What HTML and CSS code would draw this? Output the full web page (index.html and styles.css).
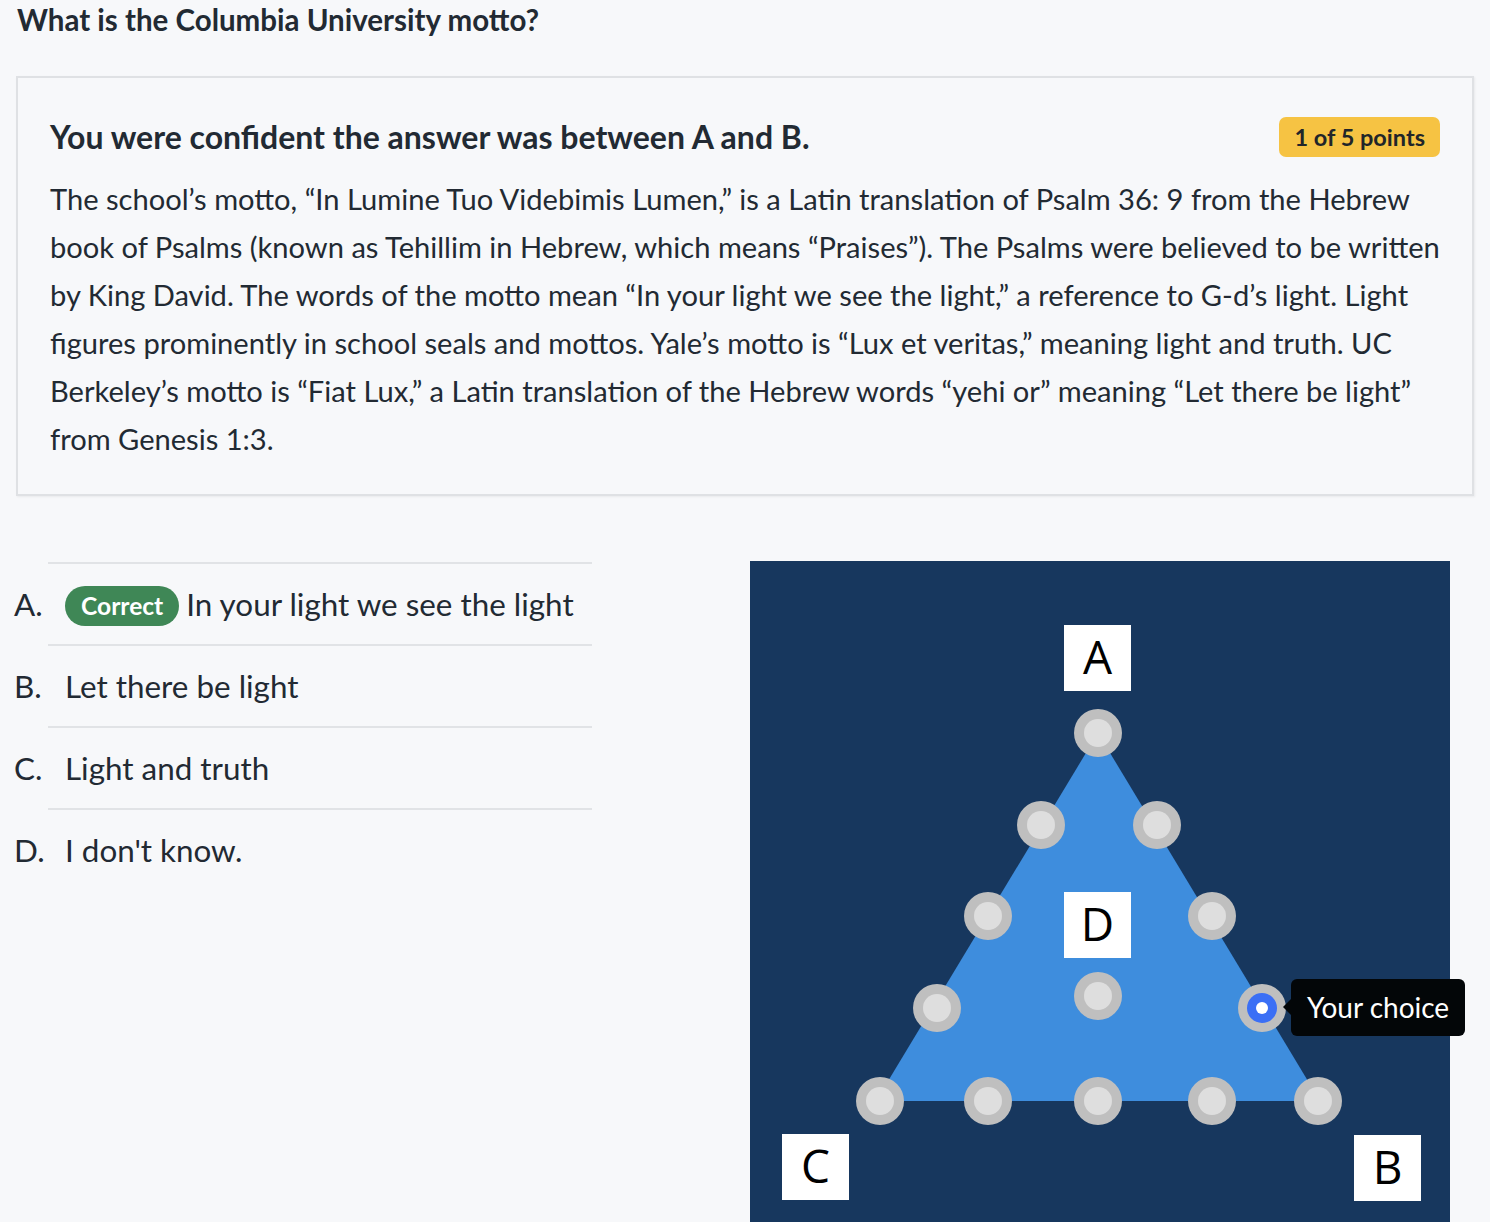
FILE: index.html
```html
<!DOCTYPE html>
<html lang="en">
<head>
<meta charset="utf-8">
<title>Columbia motto</title>
<link rel="stylesheet" href="styles.css">
</head>
<body>
<h1 class="question">What is the Columbia University motto?</h1>
<section class="card">
  <div class="card-head">
    <h2 class="card-title">You were confident the answer was between A and B.</h2>
    <span class="points">1 of 5 points</span>
  </div>
  <p class="explain">The school’s motto, “In Lumine Tuo Videbimis Lumen,” is a Latin translation of Psalm 36: 9 from the Hebrew book of Psalms (known as Tehillim in Hebrew, which means “Praises”). The Psalms were believed to be written by King David. The words of the motto mean “In your light we see the light,” a reference to G-d’s light. Light figures prominently in school seals and mottos. Yale’s motto is “Lux et veritas,” meaning light and truth. UC Berkeley’s motto is “Fiat Lux,” a Latin translation of the Hebrew words “yehi or” meaning “Let there be light” from Genesis 1:3.</p>
</section>
<div class="content">
  <ul class="answers">
    <li class="answer"><span class="letter">A.</span><span class="badge">Correct</span><span class="text">In your light we see the light</span></li>
    <li class="answer"><span class="letter">B.</span><span class="text">Let there be light</span></li>
    <li class="answer"><span class="letter">C.</span><span class="text">Light and truth</span></li>
    <li class="answer"><span class="letter">D.</span><span class="text">I don't know.</span></li>
  </ul>
  <div class="diagram">
    <svg class="tri" width="700" height="700" viewBox="0 0 700 700" xmlns="http://www.w3.org/2000/svg">
      <polygon points="348,172 126,540 570,540" fill="#3e8ddd"/>
      <g><circle cx="348" cy="172" r="24" fill="#bfbfbf"/><circle cx="348" cy="172" r="14" fill="#dedede"/></g>
      <g><circle cx="291" cy="264" r="24" fill="#bfbfbf"/><circle cx="291" cy="264" r="14" fill="#dedede"/></g>
      <g><circle cx="407" cy="264" r="24" fill="#bfbfbf"/><circle cx="407" cy="264" r="14" fill="#dedede"/></g>
      <g><circle cx="238" cy="355" r="24" fill="#bfbfbf"/><circle cx="238" cy="355" r="14" fill="#dedede"/></g>
      <g><circle cx="462" cy="355" r="24" fill="#bfbfbf"/><circle cx="462" cy="355" r="14" fill="#dedede"/></g>
      <g><circle cx="187" cy="447" r="24" fill="#bfbfbf"/><circle cx="187" cy="447" r="14" fill="#dedede"/></g>
      <g><circle cx="348" cy="435" r="24" fill="#bfbfbf"/><circle cx="348" cy="435" r="14" fill="#dedede"/></g>
      <g><circle cx="512" cy="447" r="24" fill="#bfbfbf"/><circle cx="512" cy="447" r="15" fill="#3b6ff5"/><circle cx="512" cy="447" r="6" fill="#ffffff"/></g>
      <g><circle cx="130" cy="540" r="24" fill="#bfbfbf"/><circle cx="130" cy="540" r="14" fill="#dedede"/></g>
      <g><circle cx="238" cy="540" r="24" fill="#bfbfbf"/><circle cx="238" cy="540" r="14" fill="#dedede"/></g>
      <g><circle cx="348" cy="540" r="24" fill="#bfbfbf"/><circle cx="348" cy="540" r="14" fill="#dedede"/></g>
      <g><circle cx="462" cy="540" r="24" fill="#bfbfbf"/><circle cx="462" cy="540" r="14" fill="#dedede"/></g>
      <g><circle cx="568" cy="540" r="24" fill="#bfbfbf"/><circle cx="568" cy="540" r="14" fill="#dedede"/></g>
      <rect x="314" y="64" width="67" height="66" fill="#ffffff"/>
      <text x="347.5" y="113" class="lbl">A</text>
      <rect x="314" y="331" width="67" height="66" fill="#ffffff"/>
      <text x="347.5" y="380" class="lbl">D</text>
      <rect x="32" y="573" width="67" height="66" fill="#ffffff"/>
      <text x="65.5" y="622" class="lbl">C</text>
      <rect x="604" y="574" width="67" height="66" fill="#ffffff"/>
      <text x="637.5" y="623" class="lbl">B</text>
    </svg>
    <div class="tooltip">Your choice</div>
  </div>
</div>
</body>
</html>
```

FILE: styles.css
```css
html, body {
  margin: 0;
  padding: 0;
  background: #f7f8fa;
  color: #222a33;
  font-family: Lato, "Open Sans", sans-serif;
}

.question {
  margin: 0;
  padding: 3px 0 0 17px;
  font-size: 29.5px;
  line-height: 34px;
  font-weight: 700;
}

.card {
  margin: 39px 16px 0 16px;
  width: 1458px;
  box-sizing: border-box;
  border: 2px solid #dfe1e4;
  box-shadow: 1px 1px 2px rgba(0,0,0,0.06);
  padding: 39px 32px 31px 32px;
}

.card-head {
  display: flex;
  justify-content: space-between;
  align-items: center;
}

.card-title {
  margin: 0;
  font-size: 32px;
  line-height: 40px;
  font-weight: 700;
}

.points {
  background: #f6c343;
  border-radius: 7px;
  padding: 0 15px;
  height: 40px;
  line-height: 40px;
  font-size: 23.5px;
  font-weight: 700;
  color: #212529;
}

.explain {
  margin: 18px 0 0 0;
  font-size: 29.1px;
  line-height: 48px;
}

.content {
  display: flex;
  gap: 158px;
  margin-top: 65px;
  padding-left: 48px;
  align-items: flex-start;
}

.answers {
  list-style: none;
  margin: 1px 0 0 0;
  padding: 0;
  width: 544px;
}

.answer {
  display: flex;
  align-items: center;
  height: 82px;
  box-sizing: border-box;
  border-top: 2px solid #e1e3e6;
  font-size: 31.4px;
}

.letter {
  margin-left: -34px;
  width: 51px;
  flex: none;
}

.badge {
  background: #3f8756;
  color: #ffffff;
  font-weight: 700;
  font-size: 24.6px;
  height: 40px;
  line-height: 40px;
  padding: 0 16px;
  border-radius: 20px;
  margin-right: 7px;
  margin-top: 4px;
}

.diagram {
  position: relative;
  width: 700px;
  height: 700px;
  background: #17375e;
}

.tri {
  display: block;
}

.lbl {
  font-family: "Open Sans", "DejaVu Sans", sans-serif;
  font-size: 46px;
  fill: #000000;
  text-anchor: middle;
}

.tooltip {
  position: absolute;
  left: 541px;
  top: 418px;
  height: 57px;
  line-height: 57px;
  padding: 0 16px;
  background: #030608;
  color: #ffffff;
  font-size: 28px;
  border-radius: 6px;
  white-space: nowrap;
}

.tooltip::before {
  content: "";
  position: absolute;
  left: -8px;
  top: 20px;
  border-top: 8px solid transparent;
  border-bottom: 8px solid transparent;
  border-right: 8px solid #030608;
}
```
